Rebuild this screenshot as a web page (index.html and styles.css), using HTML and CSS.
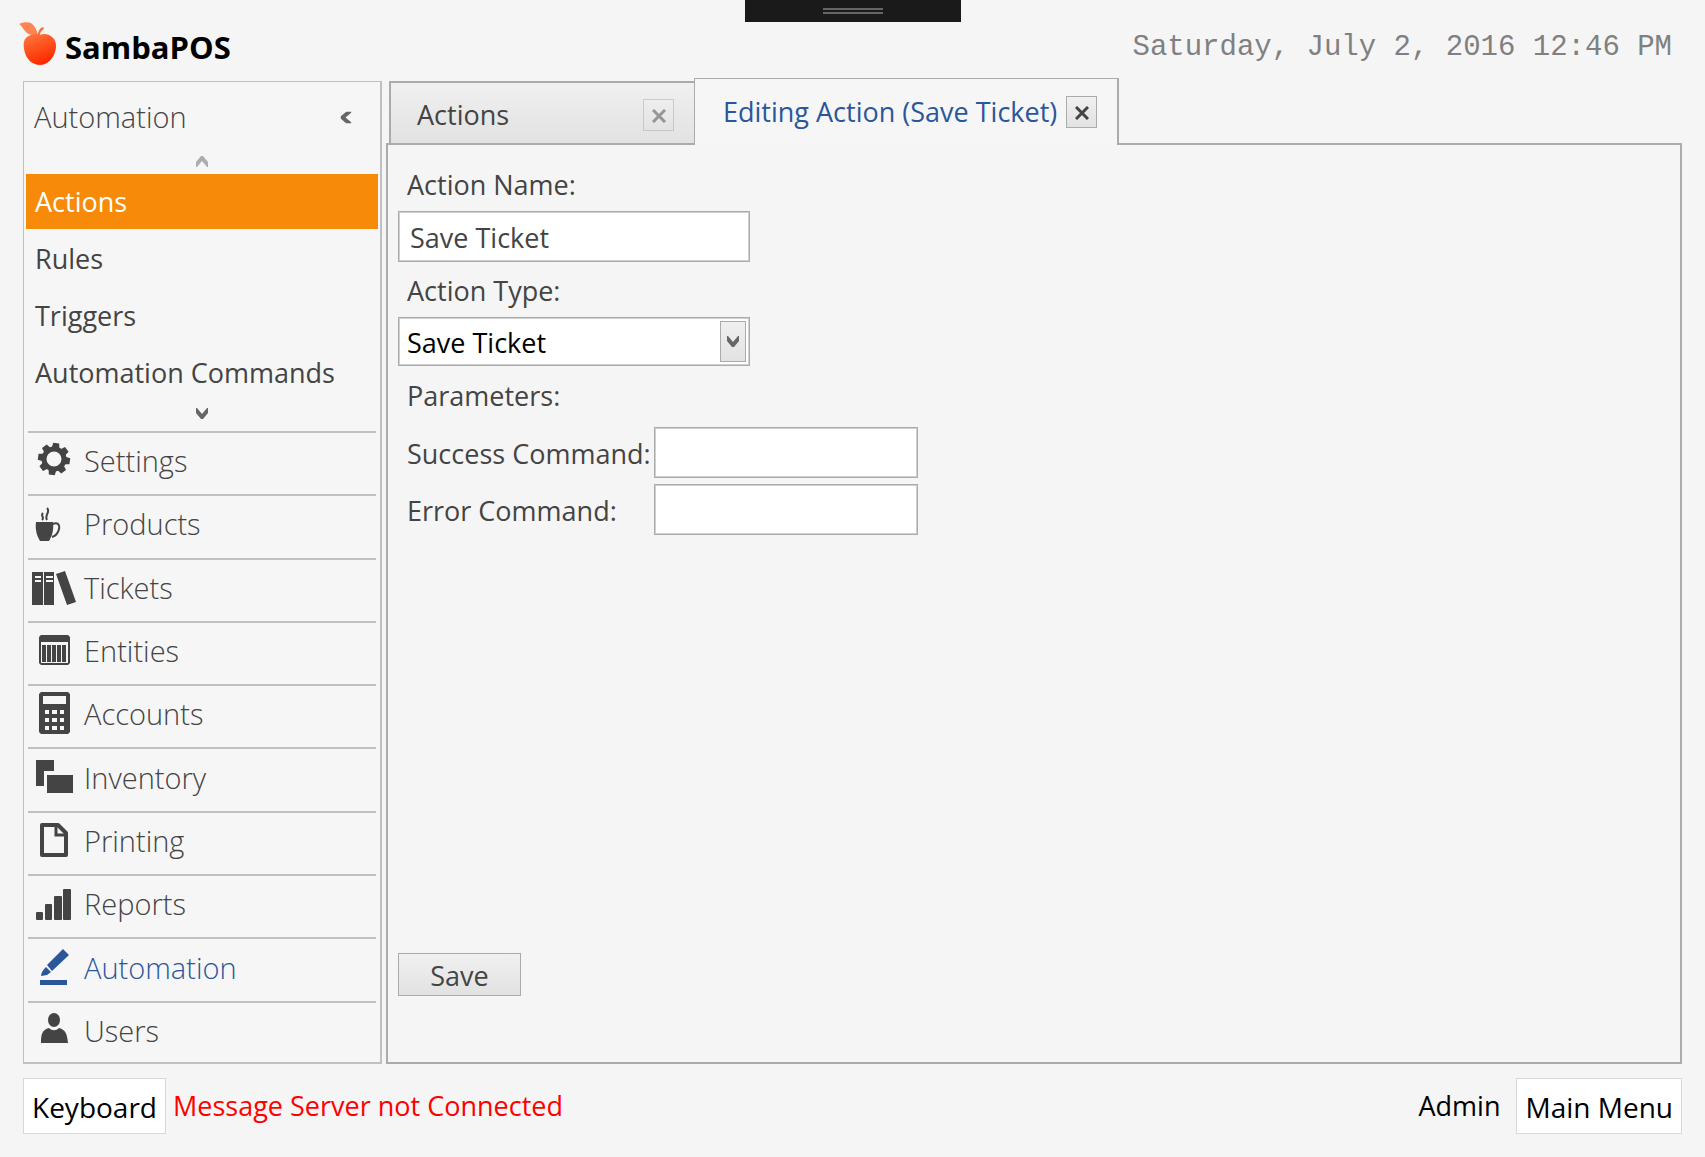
FILE: index.html
```html
<!DOCTYPE html>
<html lang="en">

<head>
    <meta charset="UTF-8">
    <meta name="viewport" content="width=device-width, initial-scale=1.0">
    <title>SambaPOS</title>
    <link rel="stylesheet" href="styles.css">
</head>

<body>
    <header class="header">
        <div class="logo">
            <svg class="logo-icon" viewBox="0 0 38 44" aria-hidden="true">
                <defs>
                    <linearGradient id="apple" x1="0" y1="0" x2="0.4" y2="1">
                        <stop offset="0" stop-color="#ff7a40" />
                        <stop offset="1" stop-color="#fc2c00" />
                    </linearGradient>
                </defs>
                <path fill="#ff8550" d="M0 2C4 0 9 0 12 1c4 3 6 7 7 12-5 1-10 0-13-4C4 7 4 5 0 2z" />
                <path fill="#ff6a35" d="M19 13c0-4 2-7 5-8l1 2c-2 1-4 3-4 6z" />
                <path fill="url(#apple)" d="M21 13c4-2 9-1 12 2 4 3 5 9 3 15-2 7-8 13-15 13S8 38 6 31C4 24 4 18 8 15c4-3 9-4 13-2z" />
            </svg>
            <span>SambaPOS</span>
        </div>
        <div class="pull-bar"><span></span></div>
        <time class="clock" datetime="2016-07-02T12:46">Saturday, July 2, 2016 12:46 PM</time>
    </header>

    <div class="workspace">
        <aside class="sidebar">
            <div class="sidebar-header">
                <h2>Automation</h2>
                <button class="collapse" type="button" aria-label="Collapse">
                    <svg class="chevron left" viewBox="0 0 12 11"><path d="M0 0h1l5 6 5-6h1v5l-5 6H5L0 5z" /></svg>
                </button>
            </div>
            <button class="scroll" type="button" aria-label="Scroll up" disabled>
                <svg class="chevron up" viewBox="0 0 12 11"><path d="M0 0h1l5 6 5-6h1v5l-5 6H5L0 5z" /></svg>
            </button>
            <ul class="commands">
                <li><a class="active" href="#actions">Actions</a></li>
                <li><a href="#rules">Rules</a></li>
                <li><a href="#triggers">Triggers</a></li>
                <li><a href="#automation-commands">Automation Commands</a></li>
            </ul>
            <button class="scroll" type="button" aria-label="Scroll down">
                <svg class="chevron" viewBox="0 0 12 11"><path d="M0 0h1l5 6 5-6h1v5l-5 6H5L0 5z" /></svg>
            </button>
            <nav class="sections">
                <a href="#settings">
                    <svg viewBox="0 0 44 48">
                        <circle cx="22" cy="21" r="10" fill="none" stroke="currentColor" stroke-width="5" />
                        <g transform="rotate(8 22 21)">
                            <path id="tooth" d="M18 11l1-6h6l1 6z" />
                            <use href="#tooth" transform="rotate(45 22 21)" />
                            <use href="#tooth" transform="rotate(90 22 21)" />
                            <use href="#tooth" transform="rotate(135 22 21)" />
                            <use href="#tooth" transform="rotate(180 22 21)" />
                            <use href="#tooth" transform="rotate(225 22 21)" />
                            <use href="#tooth" transform="rotate(270 22 21)" />
                            <use href="#tooth" transform="rotate(315 22 21)" />
                        </g>
                    </svg>
                    Settings
                </a>
                <a href="#products">
                    <svg viewBox="0 0 44 48">
                        <path d="M4 21h17c1 8-1 14-4 19H8C5 35 3 29 4 21z" />
                        <path fill="none" stroke="currentColor" stroke-width="2" d="M21 23c4-2 7 0 6 5-1 5-4 7-7 8M11 12c-3 3 2 4-1 7M15 7c4 4-3 7 0 12" />
                    </svg>
                    Products
                </a>
                <a href="#tickets">
                    <svg viewBox="0 0 44 48">
                        <path fill-rule="evenodd" d="M0 7h11v33H0zM3 11v2h6v-2zM3 15v2h6v-2zM12 7h10v33H12zM14 11v2h7v-2zM14 15v2h7v-2zM24 9l9-3 11 31-9 3z" />
                    </svg>
                    Tickets
                </a>
                <a href="#entities">
                    <svg viewBox="0 0 44 48">
                        <path fill-rule="evenodd" d="M9 7h27l2 2v26l-2 2H9l-2-2V9zM9 14v21h27V14z" />
                        <path d="M10 17h4v17h-4zM15 17h4v17h-4zM20 17h4v17h-4zM25 17h4v17h-4zM30 17h4v17h-4z" />
                    </svg>
                    Entities
                </a>
                <a href="#accounts">
                    <svg viewBox="0 0 44 48">
                        <path fill-rule="evenodd" d="M9 1h27l2 2v38l-2 2H9l-2-2V3zM11 5v8h23V5zM13 19v4h4v-4zM20 19v4h5v-4zM28 19v4h4v-4zM13 27v4h4v-4zM20 27v4h5v-4zM28 27v4h4v-4zM13 35v4h4v-4zM20 35v4h5v-4zM28 35v4h4v-4z" />
                    </svg>
                    Accounts
                </a>
                <a href="#inventory">
                    <svg viewBox="0 0 44 48">
                        <path d="M4 5h18v11H12v15H4zM15 20h26v18H15z" />
                    </svg>
                    Inventory
                </a>
                <a href="#printing">
                    <svg viewBox="0 0 44 48">
                        <path fill="none" stroke="currentColor" stroke-width="4" stroke-linejoin="round" d="M10 7h16l8 8v22H10z" />
                        <path fill="none" stroke="currentColor" stroke-width="3" d="M24 7v10h10" />
                    </svg>
                    Printing
                </a>
                <a href="#reports">
                    <svg viewBox="0 0 44 48">
                        <rect x="4" y="31" width="7" height="8" rx="1" />
                        <rect x="13" y="23" width="7" height="16" rx="1" />
                        <rect x="22" y="15" width="8" height="24" rx="1" />
                        <rect x="31" y="8" width="8" height="31" rx="1" />
                    </svg>
                    Reports
                </a>
                <a class="current" href="#automation">
                    <svg viewBox="0 0 44 48">
                        <path d="M31 4l6 6-17 16-5-6zM14 22l5 5-4 3-6 1c0-3 2-6 5-9zM8 35h27v5H8z" />
                    </svg>
                    Automation
                </a>
                <a href="#users">
                    <svg viewBox="0 0 44 48">
                        <ellipse cx="22" cy="12" rx="6" ry="7" />
                        <path d="M9 35c0-9 1-13 8-15 3 3 7 3 10 0 7 2 8 6 9 15z" />
                    </svg>
                    Users
                </a>
            </nav>
        </aside>

        <main class="main">
            <div class="tabs">
                <div class="tab">
                    <span>Actions</span>
                    <button class="close" type="button" aria-label="Close Actions" disabled>
                        <svg viewBox="0 0 14 14"><path d="M1 1l12 12M13 1L1 13" /></svg>
                    </button>
                </div>
                <div class="tab selected">
                    <span>Editing Action (Save Ticket)</span>
                    <button class="close" type="button" aria-label="Close Editing Action">
                        <svg viewBox="0 0 14 14"><path d="M1 1l12 12M13 1L1 13" /></svg>
                    </button>
                </div>
            </div>
            <form class="panel">
                <label for="action-name">Action Name:</label>
                <input class="field" id="action-name" type="text" value="Save Ticket">
                <label for="action-type">Action Type:</label>
                <div class="dropdown">
                    <select id="action-type">
                        <option>Save Ticket</option>
                    </select>
                    <span class="dropdown-arrow">
                        <svg class="chevron" viewBox="0 0 12 11"><path d="M0 0h1l5 6 5-6h1v5l-5 6H5L0 5z" /></svg>
                    </span>
                </div>
                <p class="caption">Parameters:</p>
                <div class="parameters">
                    <label for="success-command">Success Command:</label>
                    <input id="success-command" type="text">
                    <label for="error-command">Error Command:</label>
                    <input id="error-command" type="text">
                </div>
                <button class="save" type="button">Save</button>
            </form>
        </main>
    </div>

    <footer class="footer">
        <button type="button">Keyboard</button>
        <span class="message">Message Server not Connected</span>
        <span class="user">Admin</span>
        <button type="button">Main Menu</button>
    </footer>
</body>

</html>
```
FILE: styles.css
```css
:root {
    --background: #f5f5f5;
    --text: #444;
    --border: #ababab;
    --light-border: #c0c0c0;
    --accent: #2b579a;
    --highlight: #f78a09;
    --button: linear-gradient(#f0f0f0, #e2e2e2);
}

* {
    box-sizing: border-box;
}

body {
    margin: 0;
    padding: 0 23px 23px;
    min-height: 100vh;
    display: flex;
    flex-direction: column;
    font-family: "Open Sans", "Noto Sans", sans-serif;
    font-size: 27px;
    line-height: 36px;
    color: var(--text);
    background-color: var(--background);
}

button,
input,
select {
    font: inherit;
    color: inherit;
    margin: 0;
    border-radius: 0;
}

a {
    color: inherit;
    text-decoration: none;
}

/* header */
.header {
    display: grid;
    grid-template-columns: 1fr auto 1fr;
    height: 78px;
}

.logo {
    display: flex;
    align-items: center;
    gap: 8px;
    padding-top: 10px;
    margin-left: -4px;
    font-size: 31px;
    font-weight: 700;
    color: #000;
}

.logo span {
    padding-top: 6px;
}

.logo-icon {
    width: 38px;
    height: 44px;
}

.pull-bar {
    width: 216px;
    height: 22px;
    padding-top: 8px;
    background-color: #1a1a1a;
}

.pull-bar span {
    display: block;
    width: 60px;
    height: 6px;
    margin: 0 auto;
    border: solid #666;
    border-width: 2px 0;
}

.clock {
    justify-self: end;
    padding: 30px 10px 0 0;
    font-family: "Liberation Mono", monospace;
    font-size: 29px;
    color: #808080;
    white-space: nowrap;
}

/* sidebar */
.workspace {
    flex: 1;
    display: flex;
    gap: 4px;
}

.sidebar {
    width: 359px;
    margin-top: 3px;
    display: flex;
    flex-direction: column;
    border: 1px solid var(--light-border);
    border-width: 1px 2px 2px 1px;
    background-color: #f6f6f6;
}

.sidebar-header {
    display: flex;
    align-items: center;
    justify-content: space-between;
    height: 66px;
    padding: 4px 28px 0 10px;
}

.sidebar-header h2 {
    margin: 0;
    font-size: 29px;
    font-weight: 300;
}

.collapse,
.scroll {
    display: flex;
    align-items: center;
    justify-content: center;
    padding: 0;
    border: none;
    background: none;
}

.scroll {
    height: 26px;
}

.scroll:disabled {
    opacity: 0.5;
}

.chevron {
    width: 12px;
    height: 11px;
    fill: #666;
}

.chevron.up {
    transform: rotate(180deg);
}

.chevron.left {
    transform: rotate(90deg);
}

.commands {
    display: grid;
    gap: 2px;
    margin: 0;
    padding: 0 2px;
    list-style: none;
}

.commands a {
    display: block;
    padding: 10px 9px 9px;
}

.commands .active {
    color: #fff;
    background-color: var(--highlight);
}

.sections {
    flex: 1;
    display: grid;
    grid-auto-rows: 1fr;
    margin: 5px 4px -2px;
}

.sections a {
    display: flex;
    align-items: center;
    gap: 8px;
    padding: 0 0 5px 4px;
    border-top: 2px solid var(--light-border);
    font-size: 29px;
    font-weight: 300;
}

.sections svg {
    width: 44px;
    height: 48px;
    margin-top: 2px;
    fill: currentColor;
}

.sections .current {
    color: var(--accent);
}

/* tabs */
.main {
    flex: 1;
    display: flex;
    flex-direction: column;
}

.tabs {
    display: flex;
    align-items: flex-end;
    height: 67px;
    padding-left: 3px;
    margin-bottom: -2px;
    z-index: 1;
}

.tab {
    display: flex;
    align-items: center;
    justify-content: space-between;
    width: 305px;
    height: 64px;
    padding: 4px 20px 0 26px;
    border: 2px solid var(--border);
    border-right: none;
    background: var(--button);
}

.tab.selected {
    width: 425px;
    height: 67px;
    padding: 0 20px 0 28px;
    border: 1px solid var(--border);
    border-width: 1px 2px 0 1px;
    color: var(--accent);
    background: #f6f6f6;
    white-space: nowrap;
}

.close {
    display: flex;
    align-items: center;
    justify-content: center;
    width: 31px;
    height: 32px;
    padding: 2px 0 0;
    border: 1px solid var(--border);
    background: var(--button);
}

.close svg {
    width: 14px;
    height: 14px;
    stroke: #444;
    stroke-width: 3;
}

.close:disabled {
    opacity: 0.5;
}

/* form */
.panel {
    flex: 1;
    display: flex;
    flex-direction: column;
    align-items: flex-start;
    padding: 20px 10px 66px;
    border: 2px solid var(--border);
}

.panel label,
.caption {
    margin: 0;
    padding: 2px 9px 8px;
}

.panel input,
.dropdown {
    border: 1px solid var(--border);
    outline: 1px solid #d0d0d0;
    outline-offset: -2px;
    background-color: #fff;
}

.panel input {
    height: 51px;
    padding: 2px 11px 0;
}

.panel .field,
.dropdown {
    width: 352px;
}

.panel .field {
    margin-bottom: 9px;
}

.dropdown {
    display: flex;
    align-items: center;
    height: 49px;
    padding: 3px;
    color: #000;
}

.dropdown select {
    flex: 1;
    height: 41px;
    padding: 2px 5px 0;
    border: none;
    background: none;
    appearance: none;
}

.dropdown-arrow {
    display: flex;
    align-items: center;
    justify-content: center;
    width: 26px;
    height: 41px;
    border: 1px solid var(--border);
    background: var(--button);
}

.caption {
    padding-top: 12px;
    padding-bottom: 13px;
}

.parameters {
    display: grid;
    grid-template-columns: 256px 264px;
    align-items: center;
    row-gap: 6px;
}

.parameters label {
    padding: 2px 0 0 9px;
    white-space: nowrap;
}

.save {
    width: 123px;
    height: 43px;
    margin-top: auto;
    padding: 2px 0 0;
    border: 1px solid var(--border);
    background: var(--button);
}

/* footer */
.footer {
    display: flex;
    align-items: center;
    gap: 7px;
    margin-top: 14px;
    color: #000;
}

.footer button {
    height: 56px;
    padding: 2px 8px 0;
    border: 1px solid #d8d8d8;
    background-color: #fff;
    font-size: 28px;
}

.message {
    color: #f00;
}

.user {
    margin-left: auto;
    margin-right: 9px;
}
```
